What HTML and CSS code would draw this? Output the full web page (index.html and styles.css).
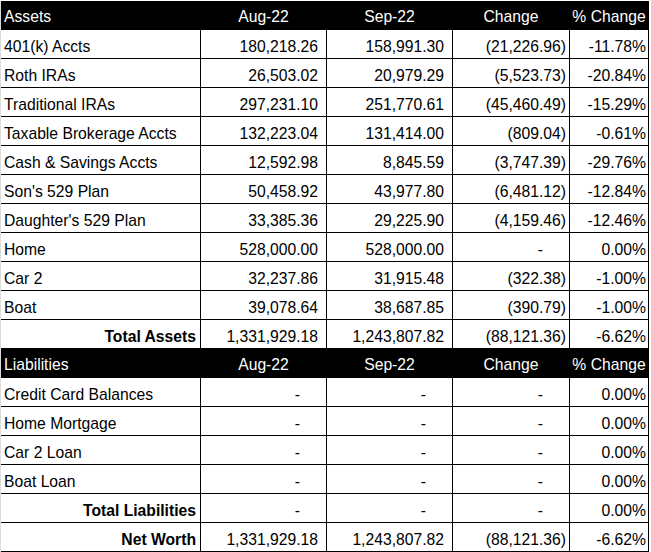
FILE: index.html
```html
<!DOCTYPE html>
<html>
<head>
<meta charset="utf-8">
<link rel="stylesheet" href="styles.css">
</head>
<body>
<div class="sheet">
  <div class="row head">
    <div class="c name">Assets</div>
    <div class="c ctr">Aug-22</div>
    <div class="c ctr">Sep-22</div>
    <div class="c ctr">Change</div>
    <div class="c ctr">% Change</div>
  </div>
  <div class="row"><div class="c name">401(k) Accts</div><div class="c num">180,218.26</div><div class="c num">158,991.30</div><div class="c neg">(21,226.96)</div><div class="c pct">-11.78%</div></div>
  <div class="row"><div class="c name">Roth IRAs</div><div class="c num">26,503.02</div><div class="c num">20,979.29</div><div class="c neg">(5,523.73)</div><div class="c pct">-20.84%</div></div>
  <div class="row"><div class="c name">Traditional IRAs</div><div class="c num">297,231.10</div><div class="c num">251,770.61</div><div class="c neg">(45,460.49)</div><div class="c pct">-15.29%</div></div>
  <div class="row"><div class="c name">Taxable Brokerage Accts</div><div class="c num">132,223.04</div><div class="c num">131,414.00</div><div class="c neg">(809.04)</div><div class="c pct">-0.61%</div></div>
  <div class="row"><div class="c name">Cash &amp; Savings Accts</div><div class="c num">12,592.98</div><div class="c num">8,845.59</div><div class="c neg">(3,747.39)</div><div class="c pct">-29.76%</div></div>
  <div class="row"><div class="c name">Son's 529 Plan</div><div class="c num">50,458.92</div><div class="c num">43,977.80</div><div class="c neg">(6,481.12)</div><div class="c pct">-12.84%</div></div>
  <div class="row"><div class="c name">Daughter's 529 Plan</div><div class="c num">33,385.36</div><div class="c num">29,225.90</div><div class="c neg">(4,159.46)</div><div class="c pct">-12.46%</div></div>
  <div class="row"><div class="c name">Home</div><div class="c num">528,000.00</div><div class="c num">528,000.00</div><div class="c dash">-</div><div class="c pct">0.00%</div></div>
  <div class="row"><div class="c name">Car 2</div><div class="c num">32,237.86</div><div class="c num">31,915.48</div><div class="c neg">(322.38)</div><div class="c pct">-1.00%</div></div>
  <div class="row"><div class="c name">Boat</div><div class="c num">39,078.64</div><div class="c num">38,687.85</div><div class="c neg">(390.79)</div><div class="c pct">-1.00%</div></div>
  <div class="row"><div class="c total">Total Assets</div><div class="c num">1,331,929.18</div><div class="c num">1,243,807.82</div><div class="c neg">(88,121.36)</div><div class="c pct">-6.62%</div></div>
  <div class="row head">
    <div class="c name">Liabilities</div>
    <div class="c ctr">Aug-22</div>
    <div class="c ctr">Sep-22</div>
    <div class="c ctr">Change</div>
    <div class="c ctr">% Change</div>
  </div>
  <div class="row"><div class="c name">Credit Card Balances</div><div class="c dash">-</div><div class="c dash">-</div><div class="c dash">-</div><div class="c pct">0.00%</div></div>
  <div class="row"><div class="c name">Home Mortgage</div><div class="c dash">-</div><div class="c dash">-</div><div class="c dash">-</div><div class="c pct">0.00%</div></div>
  <div class="row"><div class="c name">Car 2 Loan</div><div class="c dash">-</div><div class="c dash">-</div><div class="c dash">-</div><div class="c pct">0.00%</div></div>
  <div class="row"><div class="c name">Boat Loan</div><div class="c dash">-</div><div class="c dash">-</div><div class="c dash">-</div><div class="c pct">0.00%</div></div>
  <div class="row"><div class="c total">Total Liabilities</div><div class="c dash">-</div><div class="c dash">-</div><div class="c dash">-</div><div class="c pct">0.00%</div></div>
  <div class="row"><div class="c total">Net Worth</div><div class="c num">1,331,929.18</div><div class="c num">1,243,807.82</div><div class="c neg">(88,121.36)</div><div class="c pct">-6.62%</div></div>
</div>
</body>
</html>
```

FILE: styles.css
```css
html, body {
  margin: 0;
  padding: 0;
  background: #ffffff;
}
body {
  font-family: "Liberation Sans", Arial, sans-serif;
  font-size: 15.7px;
  color: #000000;
}
.sheet {
  width: 648px;
  margin-top: 1px;
  margin-left: 0;
  border-left: 1px solid #dcdcdc;
  box-sizing: content-box;
}
.row {
  display: grid;
  grid-template-columns: 200px 126px 126px 117px 79px;
  height: 29px;
  box-sizing: border-box;
  border-bottom: 1px solid #000000;
}
.c {
  display: flex;
  align-items: flex-end;
  line-height: 18px;
  padding-bottom: 2px;
  box-sizing: border-box;
  border-right: 1px solid #000000;
  white-space: nowrap;
  overflow: hidden;
}
.name {
  padding-left: 3px;
  justify-content: flex-start;
}
.total {
  justify-content: flex-end;
  padding-right: 4px;
  font-weight: bold;
}
.num {
  justify-content: flex-end;
  padding-right: 8px;
}
.neg {
  justify-content: flex-end;
  padding-right: 3px;
}
.pct {
  justify-content: flex-end;
  padding-right: 2px;
}
.dash {
  justify-content: flex-end;
  padding-right: 26px;
}
.ctr {
  justify-content: center;
}
.head {
  background: #000000;
  color: #ffffff;
}
.head .c {
  padding-bottom: 3px;
}
```
